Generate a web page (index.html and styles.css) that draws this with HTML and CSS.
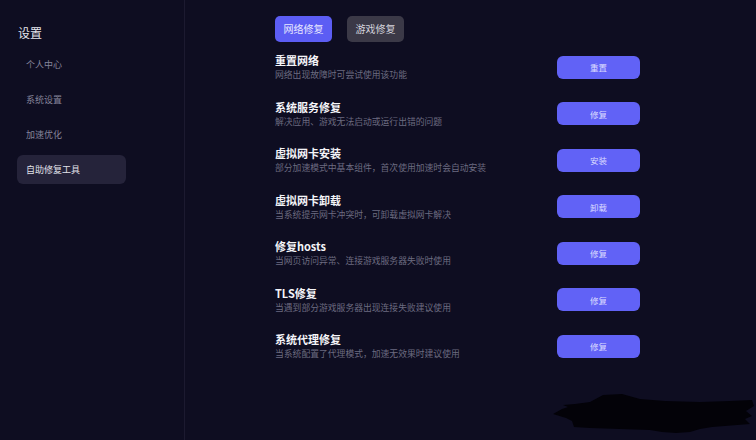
FILE: index.html
```html
<!DOCTYPE html>
<html lang="zh-CN">
<head>
<meta charset="utf-8">
<title>设置</title>
<link rel="stylesheet" href="styles.css">
</head>
<body>
<div class="app">
  <aside class="sidebar">
    <div class="side-title">设置</div>
    <nav class="side-nav">
      <div class="side-item">个人中心</div>
      <div class="side-item">系统设置</div>
      <div class="side-item">加速优化</div>
      <div class="side-item active">自助修复工具</div>
    </nav>
  </aside>
  <main class="main">
    <div class="tabs">
      <div class="tab tab-active">网络修复</div>
      <div class="tab">游戏修复</div>
    </div>
    <div class="rows">
      <div class="row">
        <div class="text"><div class="title">重置网络</div><div class="sub">网络出现故障时可尝试使用该功能</div></div>
        <button class="btn">重置</button>
      </div>
      <div class="row">
        <div class="text"><div class="title">系统服务修复</div><div class="sub">解决应用、游戏无法启动或运行出错的问题</div></div>
        <button class="btn">修复</button>
      </div>
      <div class="row">
        <div class="text"><div class="title">虚拟网卡安装</div><div class="sub">部分加速模式中基本组件，首次使用加速时会自动安装</div></div>
        <button class="btn">安装</button>
      </div>
      <div class="row">
        <div class="text"><div class="title">虚拟网卡卸载</div><div class="sub">当系统提示网卡冲突时，可卸载虚拟网卡解决</div></div>
        <button class="btn">卸载</button>
      </div>
      <div class="row">
        <div class="text"><div class="title">修复hosts</div><div class="sub">当网页访问异常、连接游戏服务器失败时使用</div></div>
        <button class="btn">修复</button>
      </div>
      <div class="row">
        <div class="text"><div class="title">TLS修复</div><div class="sub">当遇到部分游戏服务器出现连接失败建议使用</div></div>
        <button class="btn">修复</button>
      </div>
      <div class="row">
        <div class="text"><div class="title">系统代理修复</div><div class="sub">当系统配置了代理模式，加速无效果时建议使用</div></div>
        <button class="btn">修复</button>
      </div>
    </div>
  </main>
</div>
<svg class="blot" width="756" height="440" viewBox="0 0 756 440" aria-hidden="true">
  <path d="M553,414 L562,409 L568,407 L563,405 L575,404 L590,402 L603,395 L622,394 L640,399 L665,401 L700,402 L730,401 L752,400 L754,406 L746,411 L752,416 L745,419 L750,424 L712,427 L700,429 L690,432 L676,433 L662,432 L650,430 L620,429 L590,428 L574,427 L572,421 L566,418 Z" fill="#030208"/>
</svg>
</body>
</html>
```
FILE: styles.css
```css
html, body {
  margin: 0;
  padding: 0;
  background: #0e0d21;
  font-family: "Noto Sans CJK SC", "Noto Sans", sans-serif;
  width: 756px;
  height: 440px;
  overflow: hidden;
}
.app {
  display: flex;
  height: 440px;
}
.sidebar {
  width: 185px;
  flex: none;
  border-right: 1px solid #1c1a30;
  box-sizing: border-box;
  padding: 24px 0 0 17px;
}
.side-title {
  color: #e6e6ee;
  font-size: 12px;
  line-height: 18px;
  padding-left: 1px;
}
.side-nav {
  margin-top: 8px;
  display: flex;
  flex-direction: column;
  gap: 6px;
  width: 109px;
}
.side-item {
  height: 29px;
  line-height: 29px;
  padding-left: 9px;
  font-size: 9px;
  color: #85849a;
  border-radius: 6px;
}
.side-item.active {
  background: #25233a;
  color: #e2e2ea;
}
.main {
  flex: 1;
  padding: 16px 0 0 90px;
}
.tabs {
  display: flex;
  gap: 15px;
}
.tab {
  height: 26px;
  width: 57px;
  box-sizing: border-box;
  border-radius: 5px;
  background: #3b3947;
  color: #d4d3dc;
  font-size: 10px;
  line-height: 26px;
  text-align: center;
}
.tab-active {
  background: #5c5df4;
  color: #e8e8ff;
}
.rows {
  margin-top: 2px;
  width: 365px;
}
.row {
  height: 46.5px;
  display: flex;
  align-items: center;
  justify-content: space-between;
}
.text {
  display: flex;
  flex-direction: column;
}
.title {
  color: #f4f4f8;
  font-size: 11px;
  font-weight: 700;
  line-height: 15px;
}
.sub {
  color: #6c6b80;
  font-size: 8.8px;
  line-height: 12px;
  margin-top: 1px;
}
.btn {
  width: 83px;
  height: 23px;
  border: none;
  border-radius: 6px;
  background: #6162f6;
  color: #dcdcff;
  font-family: inherit;
  font-size: 8.5px;
  padding: 0;
}
.blot {
  position: absolute;
  left: 0;
  top: 0;
  pointer-events: none;
}
```
